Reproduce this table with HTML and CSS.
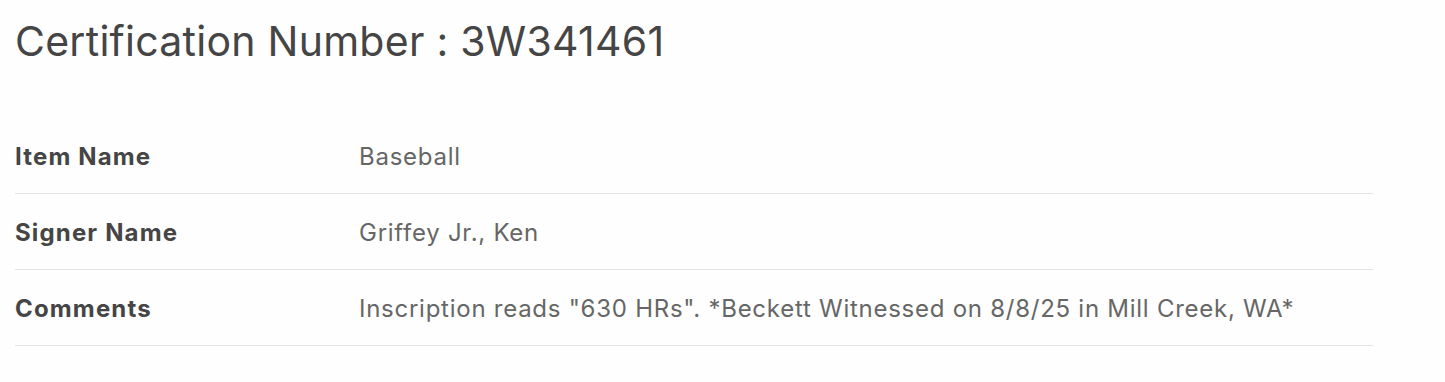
FILE: index.html
```html
<!DOCTYPE html>
<html>
<head>
<meta charset="utf-8">
<link rel="stylesheet" href="styles.css">
</head>
<body>
<div class="page">
  <h1 class="title">Certification Number : 3W341461</h1>
  <div class="details">
    <div class="row">
      <div class="label">Item Name</div>
      <div class="value">Baseball</div>
    </div>
    <div class="row">
      <div class="label">Signer Name</div>
      <div class="value">Griffey Jr., Ken</div>
    </div>
    <div class="row">
      <div class="label">Comments</div>
      <div class="value">Inscription reads "630 HRs". *Beckett Witnessed on 8/8/25 in Mill Creek, WA*</div>
    </div>
  </div>
</div>
</body>
</html>
```

FILE: styles.css
```css
html, body {
  margin: 0;
  padding: 0;
  background: #fefefe;
}
.page {
  padding: 17px 0 0 15px;
  width: 1358px;
  font-family: Inter, "Helvetica Neue", Arial, sans-serif;
}
.title {
  margin: 0;
  font-size: 41px;
  font-weight: 400;
  line-height: 48px;
  color: #454545;
  letter-spacing: 0.26px;
}
.details {
  margin-top: 53px;
}
.row {
  display: grid;
  grid-template-columns: 344px 1fr;
  align-items: center;
  height: 76px;
  padding-top: 1px;
  box-sizing: border-box;
  border-bottom: 1px solid #e3e3e3;
}
.label {
  font-size: 24px;
  font-weight: 700;
  color: #454545;
  letter-spacing: 1.15px;
}
.value {
  font-size: 24px;
  font-weight: 400;
  color: #666666;
  letter-spacing: 0.74px;
}
```
